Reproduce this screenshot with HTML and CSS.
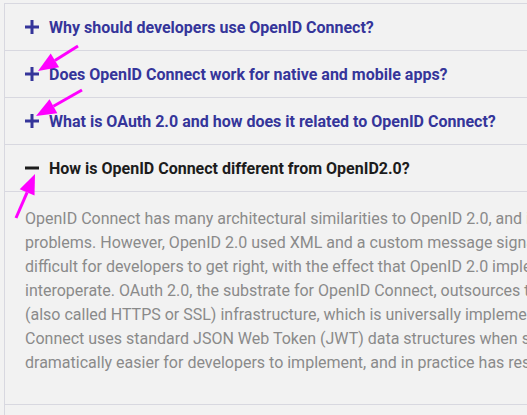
FILE: index.html
```html
<!DOCTYPE html>
<html lang="en">
<head>
<meta charset="utf-8">
<title>OpenID Connect FAQ</title>
<link rel="stylesheet" href="styles.css">
</head>
<body>
<div class="faq">
  <div class="item">
    <div class="question">
      <svg class="icon plus" viewBox="0 0 14 14" width="14" height="14"><rect x="0" y="5.5" width="14" height="3"/><rect x="5.5" y="0" width="3" height="14"/></svg>
      <span>Why should developers use OpenID Connect?</span>
    </div>
  </div>
  <div class="item">
    <div class="question">
      <svg class="icon plus" viewBox="0 0 14 14" width="14" height="14"><rect x="0" y="5.5" width="14" height="3"/><rect x="5.5" y="0" width="3" height="14"/></svg>
      <span>Does OpenID Connect work for native and mobile apps?</span>
    </div>
  </div>
  <div class="item">
    <div class="question">
      <svg class="icon plus" viewBox="0 0 14 14" width="14" height="14"><rect x="0" y="5.5" width="14" height="3"/><rect x="5.5" y="0" width="3" height="14"/></svg>
      <span>What is OAuth 2.0 and how does it related to OpenID Connect?</span>
    </div>
  </div>
  <div class="item open">
    <div class="question">
      <svg class="icon minus" viewBox="0 0 14 14" width="14" height="14"><rect x="0" y="5.5" width="14" height="3"/></svg>
      <span>How is OpenID Connect different from OpenID2.0?</span>
    </div>
    <p class="answer">OpenID Connect has many architectural similarities to OpenID 2.0, and in fact the protocols solve a very similar set of<br>problems. However, OpenID 2.0 used XML and a custom message signature scheme that in practice sometimes proved<br>difficult for developers to get right, with the effect that OpenID 2.0 implementations would sometimes mysteriously refuse to<br>interoperate. OAuth 2.0, the substrate for OpenID Connect, outsources the necessary encryption to the Web's built-in TLS<br>(also called HTTPS or SSL) infrastructure, which is universally implemented on both client and server platforms. OpenID<br>Connect uses standard JSON Web Token (JWT) data structures when signatures are required. This makes OpenID Connect<br>dramatically easier for developers to implement, and in practice has resulted in much better interoperability.</p>
  </div>
  <div class="item">
    <div class="question">
      <svg class="icon plus" viewBox="0 0 14 14" width="14" height="14"><rect x="0" y="5.5" width="14" height="3"/><rect x="5.5" y="0" width="3" height="14"/></svg>
      <span>How does OpenID Connect relate to SAML?</span>
    </div>
  </div>
</div>

<svg class="annotations" width="527" height="415" viewBox="0 0 527 415">
  <g class="arrow">
    <line x1="78" y1="46" x2="54.9" y2="60.4"/>
    <polygon points="38,71 59.1,67.2 50.7,53.6"/>
  </g>
  <g class="arrow">
    <line x1="82" y1="90" x2="53.4" y2="106.2"/>
    <polygon points="36,116 57.3,113.2 49.5,99.2"/>
  </g>
  <g class="arrow">
    <line x1="16" y1="218" x2="27.1" y2="192.4"/>
    <polygon points="35,174 34.5,195.6 19.7,189.2"/>
  </g>
</svg>
</body>
</html>
```

FILE: styles.css
```css
html, body {
  margin: 0;
  padding: 0;
  background: #f2f2f2;
  overflow: hidden;
}

body {
  font-family: Roboto, "Liberation Sans", sans-serif;
  width: 527px;
  height: 415px;
  position: relative;
}

.faq {
  margin: 3px 0 0 4px;
  width: 1100px;
  border-top: 1px solid #d8d8e0;
  border-left: 1px solid #d8d8e0;
}

.item {
  border-bottom: 1px solid #d8d8e0;
}

.question {
  height: 46px;
  display: flex;
  align-items: center;
  gap: 10px;
  padding-left: 20px;
  font-size: 16px;
  font-weight: 700;
  color: #35359a;
}

.icon {
  flex: none;
  fill: #35359a;
}

.open .question {
  color: #1c1c1c;
  border-bottom: 1px solid #d8d8e0;
}

.open .icon {
  fill: #1c1c1c;
}

.answer {
  margin: 0;
  padding: 15px 0 29px 20px;
  font-size: 16px;
  line-height: 24px;
  color: #8a8a8a;
  white-space: nowrap;
}

.annotations {
  position: absolute;
  left: 0;
  top: 0;
  pointer-events: none;
}

.arrow line {
  stroke: #ff00ff;
  stroke-width: 3;
}

.arrow polygon {
  fill: #ff00ff;
}
```
